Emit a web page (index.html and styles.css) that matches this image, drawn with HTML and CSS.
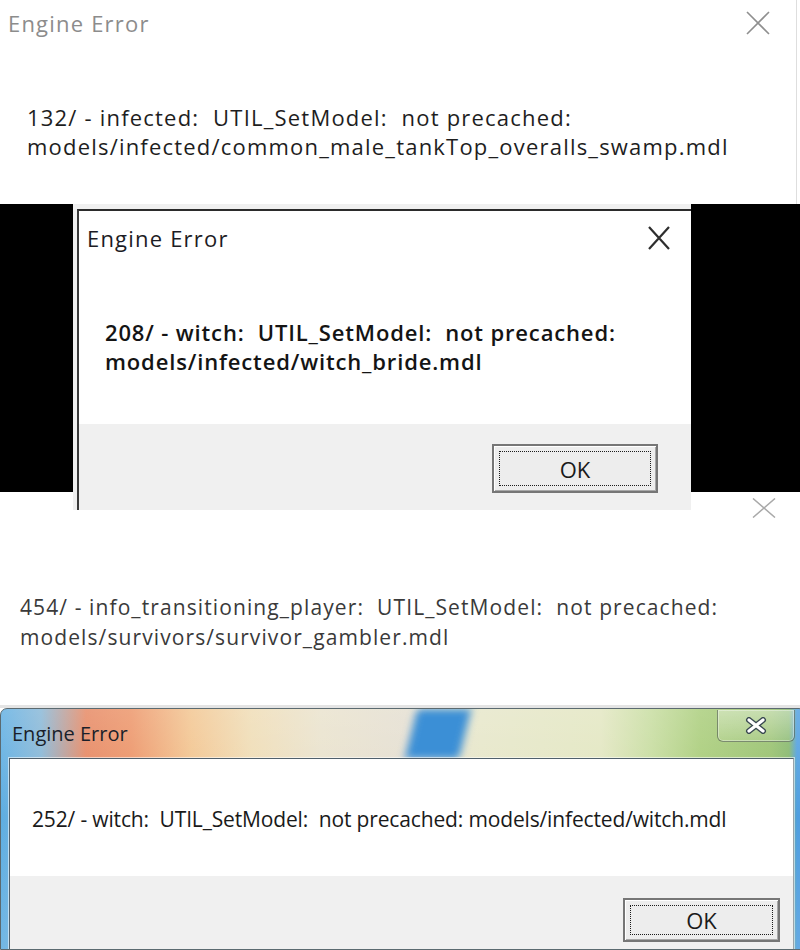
FILE: index.html
```html
<!DOCTYPE html>
<html lang="en">
<head>
<meta charset="utf-8">
<title>Engine Error</title>
<link rel="stylesheet" href="styles.css">
</head>
<body>
<div class="page">

  <section class="shot1">
    <div class="bar1">
      <span class="title1">Engine Error</span>
      <svg class="x1" width="24" height="24" viewBox="0 0 24 24"><path d="M1 1 L23 23 M23 1 L1 23" stroke="#8f8f8f" stroke-width="1.6" fill="none"/></svg>
    </div>
    <p class="msg1">132/ - infected:  UTIL_SetModel:  not precached:
models/infected/common_male_tankTop_overalls_swamp.mdl</p>
  </section>

  <section class="shot2">
    <div class="dlg2">
      <div class="win2">
        <div class="body2">
          <div class="bar2">
            <span class="title2">Engine Error</span>
            <svg class="x2" width="22" height="24" viewBox="0 0 22 24"><path d="M1 1 L21 23 M21 1 L1 23" stroke="#2e2e2e" stroke-width="2.2" fill="none"/></svg>
          </div>
          <p class="msg2">208/ - witch:  UTIL_SetModel:  not precached:
models/infected/witch_bride.mdl</p>
        </div>
        <div class="foot2">
          <button class="ok ok2"><span class="focus">OK</span></button>
        </div>
      </div>
    </div>
  </section>

  <section class="shot3">
    <div class="bar3">
      <svg class="x3" width="24" height="20" viewBox="0 0 24 20"><path d="M1 0.5 L23 19.5 M23 0.5 L1 19.5" stroke="#a9a9a9" stroke-width="1.5" fill="none"/></svg>
    </div>
    <p class="msg3">454/ - info_transitioning_player:  UTIL_SetModel:  not precached:
models/survivors/survivor_gambler.mdl</p>
  </section>

  <section class="shot4">
    <div class="bar4">
      <span class="title4">Engine Error</span>
      <span class="close4">
        <svg width="22" height="17" viewBox="0 0 22 17"><path d="M4 3 L18 14 M18 3 L4 14" stroke="#3b4a52" stroke-width="6" stroke-linecap="round" fill="none"/><path d="M4 3 L18 14 M18 3 L4 14" stroke="#ffffff" stroke-width="3.2" stroke-linecap="round" fill="none"/></svg>
      </span>
    </div>
    <div class="client4">
      <div class="body4">
        <p class="msg4">252/ - witch:  UTIL_SetModel:  not precached: models/infected/witch.mdl</p>
      </div>
      <div class="foot4">
        <button class="ok ok4"><span class="focus">OK</span></button>
      </div>
    </div>
  </section>

</div>
</body>
</html>
```

FILE: styles.css
```css
* { box-sizing: border-box; }

html, body {
  margin: 0;
  padding: 0;
  background: #ffffff;
}

.page {
  width: 800px;
  height: 950px;
  overflow: hidden;
  font-family: "Open Sans", "Noto Sans", "DejaVu Sans", sans-serif;
}

p { margin: 0; }

/* ---------- shot 1 ---------- */
.shot1 {
  width: 797px;
  height: 204px;
  background: #ffffff;
  border-right: 1px solid #dedede;
}

.bar1 {
  height: 46px;
  display: flex;
  align-items: center;
  justify-content: space-between;
  padding: 0 26px 0 8px;
}

.title1 {
  font-size: 22px;
  letter-spacing: 1.2px;
  color: #8c8c8c;
}

.msg1 {
  margin-top: 57px;
  padding-left: 27px;
  white-space: pre;
  font-size: 22px;
  line-height: 29px;
  letter-spacing: 1.2px;
  color: #1e1e1e;
}

/* ---------- shot 2 ---------- */
.shot2 {
  height: 288px;
  background: #000000;
  padding-left: 73px;
}

.dlg2 {
  position: relative;
  z-index: 2;
  width: 618px;
  height: 306px;
  background: #f0f0f0;
  padding: 5px 0 0 4px;
}

.win2 {
  height: 100%;
  display: flex;
  flex-direction: column;
  border-top: 2px solid #2b2b2b;
  border-left: 2px solid #3a3a3a;
  background: #f0f0f0;
}

.body2 {
  height: 213px;
  background: #ffffff;
}

.bar2 {
  height: 54px;
  display: flex;
  align-items: center;
  justify-content: space-between;
  padding: 0 21px 0 8px;
}

.title2 {
  font-size: 22px;
  letter-spacing: 1.2px;
  color: #1c1c24;
}

.msg2 {
  margin-top: 53px;
  padding-left: 26px;
  white-space: pre;
  font-size: 22px;
  font-weight: 600;
  line-height: 29px;
  letter-spacing: 0.85px;
  color: #141414;
}

.foot2 {
  flex: 1;
  display: flex;
  justify-content: flex-end;
  align-items: flex-start;
  padding: 20px 33px 0 0;
}

/* ---------- OK buttons ---------- */
.ok {
  font-family: "Open Sans", "Noto Sans", sans-serif;
  display: flex;
  padding: 5px;
  margin: 0;
  background: #ededed;
  border: 2px solid #767676;
  box-shadow: inset 1px 1px 0 #ffffff, inset -1px -1px 0 #a8a8a8;
  color: #1a1a1a;
}

.ok .focus {
  flex: 1;
  display: flex;
  align-items: center;
  justify-content: center;
  border: 1px dotted #1c1c1c;
}

.ok2 {
  width: 166px;
  height: 49px;
  font-size: 22px;
}

.ok4 {
  width: 157px;
  height: 44px;
  font-size: 22px;
}

/* ---------- shot 3 ---------- */
.shot3 {
  height: 216px;
  background: #ffffff;
  border-bottom: 3px solid #e4e4e4;
}

.bar3 {
  height: 32px;
  display: flex;
  align-items: flex-end;
  justify-content: flex-end;
  padding: 0 24px 6px 0;
}

.msg3 {
  margin-top: 68px;
  padding-left: 20px;
  white-space: pre;
  font-size: 21px;
  line-height: 30px;
  letter-spacing: 1.1px;
  color: #3a3a3a;
}

/* ---------- shot 4 ---------- */
.shot4 {
  position: relative;
  height: 242px;
  width: 806px;
  border: 1px solid #5b6a70;
  border-radius: 7px 7px 0 0;
  background:
    linear-gradient(to bottom, rgba(255,255,255,0.18), rgba(255,255,255,0) 45%, rgba(255,255,255,0.12) 100%),
    linear-gradient(to right,
      #5eaee2 0px, #86b6d6 40px, #e68660 85px, #ec9366 130px,
      #f2c48e 190px, #efdcb4 250px, #e9e2cc 320px, #e4ded0 405px,
      #e6e6c8 480px, #e2e6c0 600px, #c6dc9e 650px, #a8cc78 700px,
      #96c06c 770px, #84b66a 788px, #4e9ee0 796px, #4e9ee0 806px);
  overflow: hidden;
}

.shot4::before {
  content: "";
  position: absolute;
  left: 410px;
  top: 0;
  width: 54px;
  height: 50px;
  background: #3b8fd6;
  transform: skewX(-14deg);
  filter: blur(4px);
}

.bar4 {
  position: relative;
  height: 49px;
  display: flex;
  align-items: center;
  justify-content: space-between;
  padding: 0 10px 0 11px;
}

.title4 {
  font-size: 20px;
  letter-spacing: 0;
  color: #1a1f2a;
}

.close4 {
  align-self: flex-start;
  margin-top: 1px;
  width: 78px;
  height: 32px;
  display: flex;
  align-items: center;
  justify-content: center;
  border: 1px solid rgba(60, 72, 60, 0.55);
  border-top: none;
  border-radius: 0 0 6px 6px;
  background: linear-gradient(to bottom, rgba(255,255,255,0.35), rgba(255,255,255,0.08));
  box-shadow: inset 0 0 0 1px rgba(255,255,255,0.35);
}

.client4 {
  position: relative;
  margin: 0 11px 0 8px;
  height: 200px;
  border: 1px solid #50606c;
  border-right-color: #9aa4aa;
  box-shadow: 0 0 0 1px rgba(255,255,255,0.55);
  background: #f0f0f0;
  display: flex;
  flex-direction: column;
}

.body4 {
  height: 117px;
  background: #ffffff;
  display: flex;
  align-items: center;
  padding: 2px 0 0 22px;
}

.msg4 {
  white-space: pre;
  font-size: 21px;
  line-height: 30px;
  letter-spacing: -0.15px;
  color: #1a1a1a;
}

.foot4 {
  flex: 1;
  display: flex;
  justify-content: flex-end;
  align-items: flex-start;
  padding: 22px 13px 0 0;
}
```
